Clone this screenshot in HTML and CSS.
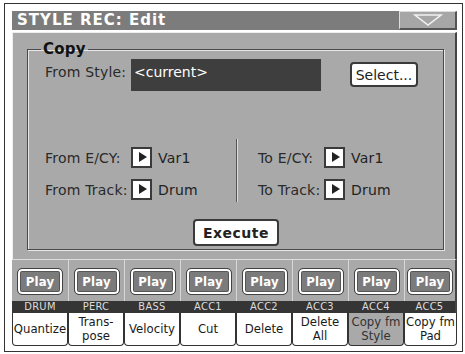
FILE: index.html
```html
<!DOCTYPE html>
<html lang="en">

<head>
    <meta charset="UTF-8">
    <title>Style Rec Edit</title>
    <link rel="stylesheet" href="styles.css">
</head>

<body>
    <div class="screen">
        <div class="titleBar">
            <div class="title">STYLE REC: Edit</div>
            <div class="menuBtn">
                <svg width="30" height="12" viewBox="0 0 30 12">
                    <path d="M2 1 H28 L15 11 Z" fill="none" stroke="#f2f2f2" stroke-width="1.5" />
                </svg>
            </div>
        </div>
        <div class="panel">
            <fieldset class="group">
                <legend>Copy</legend>
                <div class="styleRow">
                    <span class="lbl">From Style:</span>
                    <div class="styleField">&lt;current&gt;</div>
                    <button class="btn selectBtn">Select...</button>
                </div>
                <div class="pairArea">
                    <div class="half">
                        <div class="paramRow">
                            <span class="lbl fromLbl">From E/CY:</span>
                            <span class="arrowBox"></span>
                            <span class="val">Var1</span>
                        </div>
                        <div class="paramRow">
                            <span class="lbl fromLbl">From Track:</span>
                            <span class="arrowBox"></span>
                            <span class="val">Drum</span>
                        </div>
                    </div>
                    <div class="sep"></div>
                    <div class="half">
                        <div class="paramRow">
                            <span class="lbl toLbl">To E/CY:</span>
                            <span class="arrowBox"></span>
                            <span class="val">Var1</span>
                        </div>
                        <div class="paramRow">
                            <span class="lbl toLbl">To Track:</span>
                            <span class="arrowBox"></span>
                            <span class="val">Drum</span>
                        </div>
                    </div>
                </div>
                <div class="execRow">
                    <button class="btn execBtn">Execute</button>
                </div>
            </fieldset>
        </div>
        <div class="tracks">
            <div class="playCell"><span class="play">Play</span></div>
            <div class="playCell"><span class="play">Play</span></div>
            <div class="playCell"><span class="play">Play</span></div>
            <div class="playCell"><span class="play">Play</span></div>
            <div class="playCell"><span class="play">Play</span></div>
            <div class="playCell"><span class="play">Play</span></div>
            <div class="playCell"><span class="play">Play</span></div>
            <div class="playCell"><span class="play">Play</span></div>
            <div class="name">DRUM</div>
            <div class="name">PERC</div>
            <div class="name">BASS</div>
            <div class="name">ACC1</div>
            <div class="name">ACC2</div>
            <div class="name">ACC3</div>
            <div class="name">ACC4</div>
            <div class="name">ACC5</div>
        </div>
        <div class="tabs">
            <div class="tab">Quantize</div>
            <div class="tab">Trans-<br>pose</div>
            <div class="tab">Velocity</div>
            <div class="tab">Cut</div>
            <div class="tab">Delete</div>
            <div class="tab">Delete<br>All</div>
            <div class="tab active">Copy fm<br>Style</div>
            <div class="tab">Copy fm<br>Pad</div>
        </div>
    </div>
</body>

</html>
```

FILE: styles.css
```css
* {
    margin: 0;
    padding: 0;
    box-sizing: border-box;
}

html,
body {
    background-color: #fff;
}

body {
    padding: 3px 3px 0 4px;
    font-family: "DejaVu Sans", sans-serif;
    font-size: 14px;
    letter-spacing: 0.2px;
    color: #222;
}

.screen {
    width: 459px;
    height: 349px;
    border: 1px solid #333;
    background-color: #fff;
    padding: 7px 5px 0 7px;
}

.titleBar {
    display: flex;
    height: 19px;
}

.title {
    flex: 1;
    background-color: #7c7c7c;
    color: #fff;
    font-weight: bold;
    font-size: 15px;
    line-height: 19px;
    padding-left: 5px;
    letter-spacing: 1px;
}

.menuBtn {
    width: 58px;
    background-color: #a6a6a6;
    border: 1px solid #555;
    border-right-width: 2px;
    border-bottom-width: 2px;
    border-top-color: #ddd;
    border-left-color: #ddd;
    display: flex;
    align-items: center;
    justify-content: center;
}

.panel {
    margin-top: 2px;
    height: 228px;
    background-color: #a9a9a9;
    border: 1px solid #eee;
    border-right: 2px solid #444;
    border-bottom: 1px solid #ddd;
    padding: 7px 11px 0 14px;
}

.group {
    height: 210px;
    border: 1px solid #4a4a4a;
    box-shadow: 1px 1px 0 #e6e6e6, inset 1px 1px 0 #e6e6e6;
    padding: 0 0 0 17px;
}

.group legend {
    font-weight: bold;
    font-size: 15px;
    margin-left: -4px;
    padding: 0 2px;
    color: #111;
}

.lbl {
    color: #2a2a2a;
}

.styleRow {
    display: flex;
    align-items: flex-start;
    margin-top: 1px;
}

.styleRow .lbl {
    width: 86px;
    margin-top: 5px;
}

.styleField {
    width: 190px;
    height: 32px;
    background-color: #3e3e3e;
    color: #fff;
    padding: 5px 3px;
    letter-spacing: 0;
}

.btn {
    font-family: "DejaVu Sans", sans-serif;
    font-size: 14px;
    background-color: #fff;
    color: #222;
    border: 2px solid #3a3a3a;
    border-radius: 4px;
}

.selectBtn {
    width: 68px;
    height: 25px;
    margin: 3px 0 0 29px;
    letter-spacing: 0;
}

.pairArea {
    display: flex;
    margin-top: 48px;
    height: 63px;
}

.half {
    display: flex;
    flex-direction: column;
    gap: 11px;
    padding-top: 8px;
}

.half:first-child {
    width: 191px;
}

.half:last-child {
    padding-left: 20px;
}

.sep {
    width: 2px;
    border-left: 1px solid #555;
    border-right: 1px solid #ddd;
}

.paramRow {
    display: flex;
    align-items: center;
    height: 21px;
}

.fromLbl {
    width: 86px;
}

.toLbl {
    width: 66px;
}

.arrowBox {
    width: 21px;
    height: 21px;
    background-color: #fff;
    border: 2px solid #3a3a3a;
    position: relative;
}

.arrowBox::after {
    content: "";
    position: absolute;
    left: 6px;
    top: 3px;
    border-left: 8px solid #222;
    border-top: 5.5px solid transparent;
    border-bottom: 5.5px solid transparent;
}

.val {
    margin-left: 6px;
}

.execRow {
    display: flex;
    padding-left: 148px;
    margin-top: 17px;
}

.execBtn {
    width: 86px;
    height: 27px;
    font-weight: bold;
    letter-spacing: 0.5px;
}

.tracks {
    display: grid;
    grid-template-columns: repeat(7, 56px) 1fr;
    background-color: #a9a9a9;
    border-right: 2px solid #444;
}

.playCell {
    height: 41px;
    border-left: 1px solid #d6d6d6;
    display: flex;
    align-items: center;
    justify-content: center;
    padding-top: 2px;
}

.playCell:first-child {
    border-left: none;
}

.play {
    width: 46px;
    height: 27px;
    border: 1px solid #444;
    border-radius: 5px;
    box-shadow: inset 0 0 0 2px #fff, inset 0 0 0 3px #555;
    background-color: #7b7b7b;
    color: #fff;
    font-family: "DejaVu Sans Condensed", "DejaVu Sans", sans-serif;
    font-weight: bold;
    font-size: 13px;
    line-height: 25px;
    text-align: center;
}

.name {
    background-color: #353535;
    color: #ddd;
    font-family: "DejaVu Sans Condensed", "DejaVu Sans", sans-serif;
    font-size: 11px;
    line-height: 12px;
    height: 12px;
    text-align: center;
    letter-spacing: 0.3px;
}

.tabs {
    display: grid;
    grid-template-columns: repeat(7, 56px) 1fr;
    height: 33px;
}

.tab {
    background-color: #fff;
    border: 1px solid #333;
    border-top: none;
    border-radius: 0 0 4px 4px;
    font-family: "DejaVu Sans Condensed", "DejaVu Sans", sans-serif;
    font-size: 13px;
    line-height: 14px;
    letter-spacing: 0;
    display: flex;
    align-items: center;
    justify-content: center;
    text-align: center;
    color: #1a1a1a;
}

.tab.active {
    background-color: #a9a9a9;
    color: #333;
}
```
